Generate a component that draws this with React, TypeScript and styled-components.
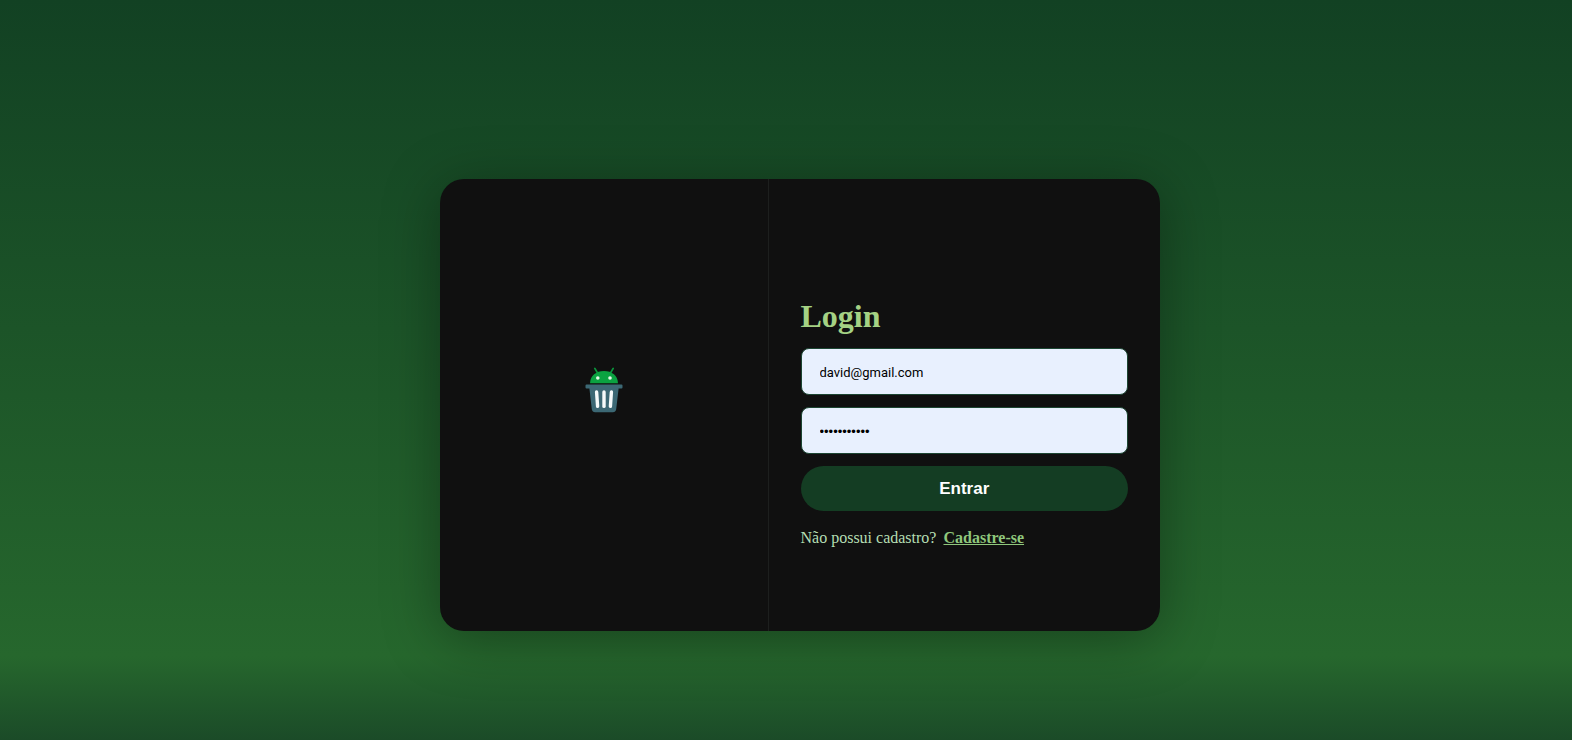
import React from "react";
import styled, { createGlobalStyle } from "styled-components";

const GlobalStyle = createGlobalStyle`
  *, *::before, *::after { box-sizing: border-box; }
  body {
    margin: 0;
    font-family: "Liberation Serif", "Times New Roman", serif;
    font-size: 16px;
    background: #1b4b28;
  }
`;

const Page = styled.main`
  min-height: 100vh;
  display: flex;
  align-items: center;
  justify-content: center;
  padding: 70px 0 0 28px;
  background: linear-gradient(to bottom, #124123 0, #26672d calc(100% - 84px), #1b4b28 100%);
`;

const Card = styled.section`
  display: flex;
  width: 100%;
  max-width: 720px;
  min-height: 452px;
  border-radius: 24px;
  background: #101010;
  box-shadow: 0 8px 56px rgba(0, 0, 0, 0.35);
  overflow: hidden;
`;

const BrandPanel = styled.div`
  flex: 1;
  display: flex;
  align-items: center;
  justify-content: center;
  padding-bottom: 30px;
  border-right: 1px solid #1d1f1e;
`;

const LoginForm = styled.form`
  flex: 1;
  display: flex;
  flex-direction: column;
  justify-content: center;
  gap: 12px;
  padding: 32px 32px 0;
`;

const Title = styled.h1`
  margin: 0;
  color: #a5d284;
  font-size: 32px;
  line-height: 40px;
`;

const Field = styled.input`
  width: 100%;
  height: 47px;
  padding: 2px 18px 0;
  border: 1px solid #1c4532;
  border-radius: 8px;
  background: #e8f0fe;
  color: #000;
  font-family: Roboto, "Liberation Sans", sans-serif;
  font-size: 13px;

  &[type="password"] {
    font-family: "Liberation Sans", Arial, sans-serif;
  }
`;

const SubmitButton = styled.button`
  height: 45px;
  padding: 2px 0 0;
  border: 0;
  border-radius: 24px;
  background: #143d23;
  color: #fff;
  font-family: "Liberation Sans", Arial, sans-serif;
  font-size: 17px;
  font-weight: 700;
  cursor: pointer;
`;

const SignUp = styled.p`
  display: flex;
  gap: 7px;
  margin: 6px 0 0;
  color: #b5dfb3;
  line-height: 18px;
`;

const SignUpLink = styled.a`
  color: #8fc77c;
  font-weight: 700;
`;

function TrashDroid() {
  return (
    <svg width="38" height="46" viewBox="0 0 38 46" role="img" aria-label="Logo">
      <g stroke="#0b963c" strokeWidth="1.8" strokeLinecap="round">
        <path d="M9.8 1.4 L12.8 6.4" />
        <path d="M28.2 1.4 L25.2 6.4" />
      </g>
      <path d="M5 16.2 C5.3 8.8 11 4.1 19 4.1 S32.7 8.8 33 16.2 Z" fill="#0ba241" />
      <circle cx="12.8" cy="11" r="1.8" fill="#e3f8e7" />
      <circle cx="25" cy="11" r="1.8" fill="#e3f8e7" />
      <path
        d="M1.5 17.4 H36.5 Q37.5 17.4 37.5 18.4 V20.4 Q37.5 21.4 36.5 21.4 H33.6 L31.2 42.2 Q30.7 45.2 27.8 45.2 H10.2 Q7.3 45.2 6.8 42.2 L4.4 21.4 H1.5 Q0.5 21.4 0.5 20.4 V18.4 Q0.5 17.4 1.5 17.4 Z"
        fill="#3c6874"
      />
      <g stroke="#f6fafa" strokeWidth="3.4" strokeLinecap="round">
        <path d="M11.6 25 L12.6 39.4" />
        <path d="M19 25 V39.4" />
        <path d="M26.4 25 L25.4 39.4" />
      </g>
    </svg>
  );
}

export default function App() {
  return (
    <>
      <GlobalStyle />
      <Page>
        <Card>
          <BrandPanel>
            <TrashDroid />
          </BrandPanel>
          <LoginForm onSubmit={(event: React.FormEvent) => event.preventDefault()}>
            <Title>Login</Title>
            <Field type="email" aria-label="E-mail" defaultValue="david@gmail.com" />
            <Field type="password" aria-label="Senha" defaultValue="abcdefghijk" />
            <SubmitButton type="submit">Entrar</SubmitButton>
            <SignUp>
              Não possui cadastro?
              <SignUpLink href="#cadastro">Cadastre-se</SignUpLink>
            </SignUp>
          </LoginForm>
        </Card>
      </Page>
    </>
  );
}
